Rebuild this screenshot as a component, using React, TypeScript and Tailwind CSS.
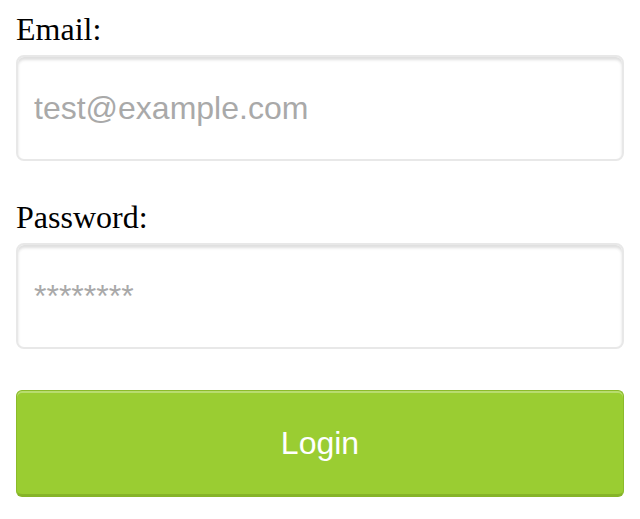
import React from "react";

export default function App() {
  return (
    <div className="w-[640px] h-[519px] bg-white px-4 pt-[12px]">
      <label className="block text-[32px] leading-[35px] text-black [font-family:'Liberation_Serif',serif]">
        Email:
      </label>
      <input
        type="text"
        placeholder="test@example.com"
        className="mt-[8px] block w-full h-[106px] rounded-[8px] border-2 border-[#e8e8e8] bg-white px-4 text-[32px] text-black placeholder:text-[#a9a9a9] shadow-[inset_0_3px_3px_rgba(0,0,0,0.13)] outline-none [font-family:'Liberation_Sans',Arial,sans-serif]"
      />
      <label className="mt-[39px] block text-[32px] leading-[35px] text-black [font-family:'Liberation_Serif',serif]">
        Password:
      </label>
      <input
        type="password"
        placeholder="********"
        className="mt-[8px] block w-full h-[106px] rounded-[8px] border-2 border-[#e8e8e8] bg-white px-4 text-[32px] text-black placeholder:text-[#a9a9a9] shadow-[inset_0_3px_3px_rgba(0,0,0,0.13)] outline-none [font-family:'Liberation_Sans',Arial,sans-serif]"
      />
      <button className="mt-[41px] block w-full h-[107px] rounded-[6px] border border-[#8bbb2a] border-b-[3px] border-b-[#86b428] bg-[#9acd32] text-[32px] text-white shadow-[inset_0_2px_0_rgba(255,255,255,0.3)] [font-family:'Liberation_Sans',Arial,sans-serif]">
        Login
      </button>
    </div>
  );
}
